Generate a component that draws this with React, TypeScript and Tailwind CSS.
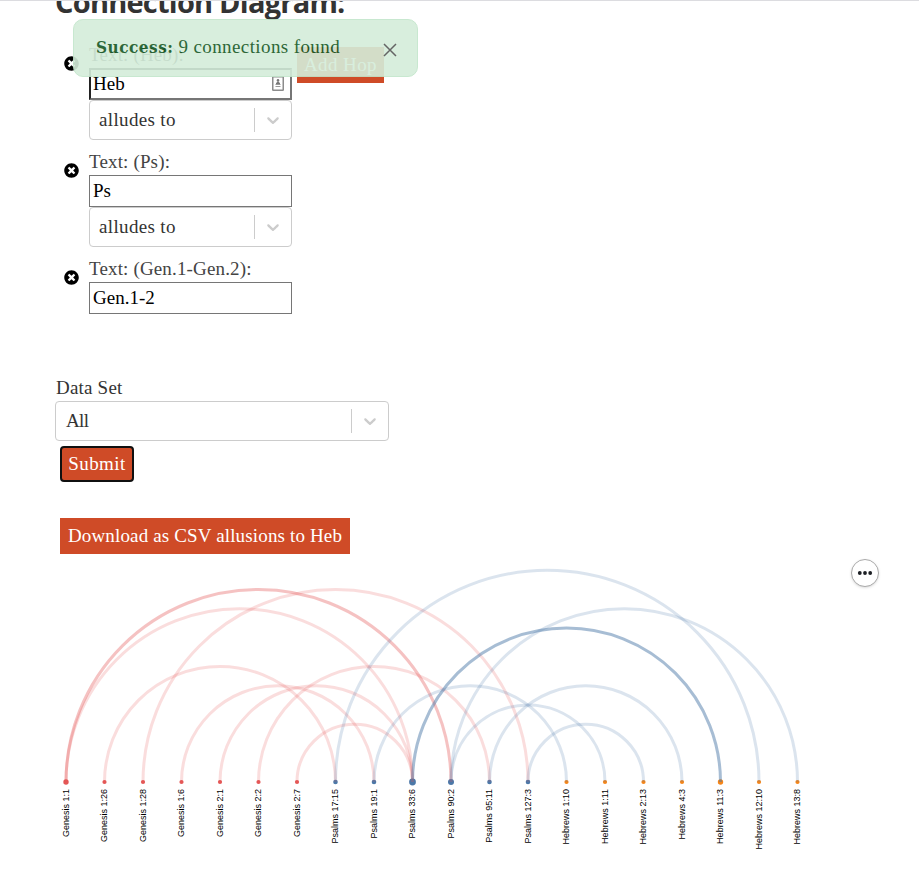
import React from 'react';
import { FaTimesCircle } from 'react-icons/fa';

const serif = "font-['Liberation_Serif',serif]";

const labels = [
  'Genesis 1:1', 'Genesis 1:26', 'Genesis 1:28', 'Genesis 1:6', 'Genesis 2:1', 'Genesis 2:2', 'Genesis 2:7',
  'Psalms 17:15', 'Psalms 19:1', 'Psalms 33:6', 'Psalms 90:2', 'Psalms 95:11', 'Psalms 127:3',
  'Hebrews 1:10', 'Hebrews 1:11', 'Hebrews 2:13', 'Hebrews 4:3', 'Hebrews 11:3', 'Hebrews 12:10', 'Hebrews 13:8',
];
const STEP = 38.5;
const X0 = 66;
const BASE = 228;
const red = '#e45756';
const blue = '#4c78a8';
const orange = '#f58518';

const arcs: [number, number, number][] = [
  [0, 10, 0.36], [0, 9, 0.2], [1, 7, 0.2], [2, 12, 0.2], [3, 8, 0.2], [4, 9, 0.2], [5, 11, 0.2], [6, 9, 0.2],
  [7, 18, 0.2], [8, 13, 0.2], [9, 17, 0.49], [10, 14, 0.2], [10, 19, 0.2], [11, 16, 0.2], [12, 15, 0.2],
];
const radii: Record<number, number> = { 0: 2.7, 7: 2.3, 8: 2.3, 9: 3.4, 10: 3, 11: 2.3, 12: 2.3, 17: 2.7 };

function Select({ value, width, tracking = 'tracking-[0.35px]' }: { value: string; width: string; tracking?: string }) {
  return (
    <div className={`flex h-10 items-center rounded-[4px] border border-[#ccc] bg-white ${width}`}>
      <span className={`flex-1 pb-[2px] pl-[9px] text-[#333] ${tracking}`}>{value}</span>
      <span className="h-6 w-px bg-[#ccc]" />
      <span className="flex w-9 justify-center">
        <svg width="20" height="20" viewBox="0 0 20 20" fill="#ccc">
          <path d="M4.516 7.548c0.436-0.446 1.043-0.481 1.576 0l3.908 3.747 3.908-3.747c0.533-0.481 1.141-0.446 1.574 0 0.436 0.445 0.408 1.197 0 1.615-0.406 0.418-4.695 4.502-4.695 4.502-0.217 0.223-0.502 0.335-0.787 0.335s-0.57-0.112-0.789-0.335c0 0-4.287-4.084-4.695-4.502s-0.436-1.17 0-1.615z" />
        </svg>
      </span>
    </div>
  );
}

function Hop({ label, value, select, first }: { label: string; value: string; select?: boolean; first?: boolean }) {
  return (
    <div className="flex">
      <FaTimesCircle className="mt-[15px] mr-[10px] size-[15px] text-black" />
      <div className="w-[203px]">
        <div className="flex h-[27px] items-center tracking-[0.15px] text-[#444]">{label}</div>
        <div className={first
          ? 'flex h-8 items-center justify-between border-2 border-[#767676] border-t-[#222] border-l-[#222] pr-[6px] pb-[2px] pl-[2px] text-black'
          : 'flex h-8 items-center border border-[#767676] pb-[2px] pl-[3px] text-black'}>
          <span>{value}</span>
          {first && (
            <svg className="mt-px" width="12" height="15" viewBox="0 0 12 15" fill="none" stroke="#8c8c8c">
              <rect x="0.75" y="0.75" width="10.5" height="13.5" rx="0.5" strokeWidth="1.5" />
              <circle cx="6" cy="4.4" r="1.3" fill="#777" stroke="none" />
              <path d="M4 8.3V7L6 5.6L8 7V8.3Z" fill="#777" stroke="none" />
              <path d="M3.5 8.5H8.5M3.5 10.5H8.5" stroke="#999" />
            </svg>
          )}
        </div>
        {select && <Select value="alludes to" width="w-[203px]" />}
      </div>
    </div>
  );
}

function Chart() {
  return (
    <svg className="block" width="919" height="316" viewBox="0 0 919 316">
      {labels.map((l, i) => (
        <circle key={l} cx={X0 + i * STEP} cy={BASE} r={radii[i] ?? 2.1} fill={i < 7 ? red : i < 13 ? blue : orange} />
      ))}
      {arcs.map(([a, b, o]) => {
        const r = ((b - a) * STEP) / 2;
        return (
          <path key={`${a}-${b}`} d={`M${X0 + a * STEP} ${BASE}A${r} ${r} 0 0 1 ${X0 + b * STEP} ${BASE}`}
            fill="none" stroke={a < 7 ? red : blue} strokeOpacity={o} strokeWidth="3" />
        );
      })}
      {labels.map((l, i) => (
        <text key={l} transform={`translate(${X0 + i * STEP + 2.7} 235) rotate(-90)`} textAnchor="end"
          className="font-['Liberation_Sans',sans-serif] text-[9px]" fill="#000">{l}</text>
      ))}
    </svg>
  );
}

export default function App() {
  return (
    <div className={`relative h-[870px] w-[919px] overflow-hidden border-t border-[#dcdce0] bg-white text-[19px] leading-[27px] ${serif}`}>
      <h1 className="-mt-[19px] ml-[55px] h-[59px] font-['Open_Sans',sans-serif] text-[29px] leading-[40px] font-bold tracking-[-0.77px] whitespace-nowrap text-[#333]">
        Connection Diagram:
      </h1>
      <div className="flex items-start pl-16">
        <div className="flex flex-col gap-2">
          <Hop label="Text: (Heb):" value="Heb" select first />
          <Hop label="Text: (Ps):" value="Ps" select />
          <Hop label="Text: (Gen.1-Gen.2):" value="Gen.1-2" />
        </div>
        <button className="mt-[6px] ml-[5px] h-9 w-[87px] bg-[#cf4b27] pb-[2px] tracking-[0.4px] whitespace-nowrap text-white">Add Hop</button>
      </div>
      <div className="mt-[60px] ml-[55px] flex flex-col items-start">
        <span className="h-[27px] pl-px tracking-[0.2px] text-[#333]">Data Set</span>
        <Select value="All" width="w-[334px]" tracking="tracking-[-0.6px] pl-[10px]" />
        <button className="mt-[5px] ml-[5px] h-9 w-[74px] rounded-[4px] border-2 border-[#101010] bg-[#cf4b27] pb-[2px] tracking-[0.4px] text-white">Submit</button>
        <button className="mt-9 ml-[5px] h-9 w-[290px] bg-[#cf4b27] pb-[2px] tracking-[0.15px] whitespace-nowrap text-white">Download as CSV allusions to Heb</button>
      </div>
      <Chart />
      <button className="absolute top-[558px] left-[851px] flex size-7 items-center justify-center rounded-full border border-[#aaa] bg-white shadow-sm">
        <svg width="16" height="16" viewBox="0 0 16 16" fill="#1b1e23"><circle cx="2.8" cy="8" r="1.9" /><circle cx="8" cy="8" r="1.9" /><circle cx="13.2" cy="8" r="1.9" /></svg>
      </button>
      <div className="absolute top-[18px] left-[73px] flex h-[58px] w-[345px] items-center rounded-[10px] border border-[#c3e6cb] bg-[#d4edda] pb-[3px] pl-[22px] text-[#155724] opacity-90">
        <span className="flex items-baseline gap-[5px] whitespace-nowrap">
          <b className="font-['DejaVu_Serif_Condensed','DejaVu_Serif',serif] text-[17px] font-bold tracking-[0.5px] [font-stretch:condensed]">Success:</b>
          <span className="tracking-[0.4px]">9 connections found</span>
        </span>
        <svg className="absolute top-[23px] left-[309px]" width="14" height="14" viewBox="0 0 14 14" stroke="#555" strokeWidth="1.5"><path d="M1 1L13 13M13 1L1 13" /></svg>
      </div>
    </div>
  );
}
